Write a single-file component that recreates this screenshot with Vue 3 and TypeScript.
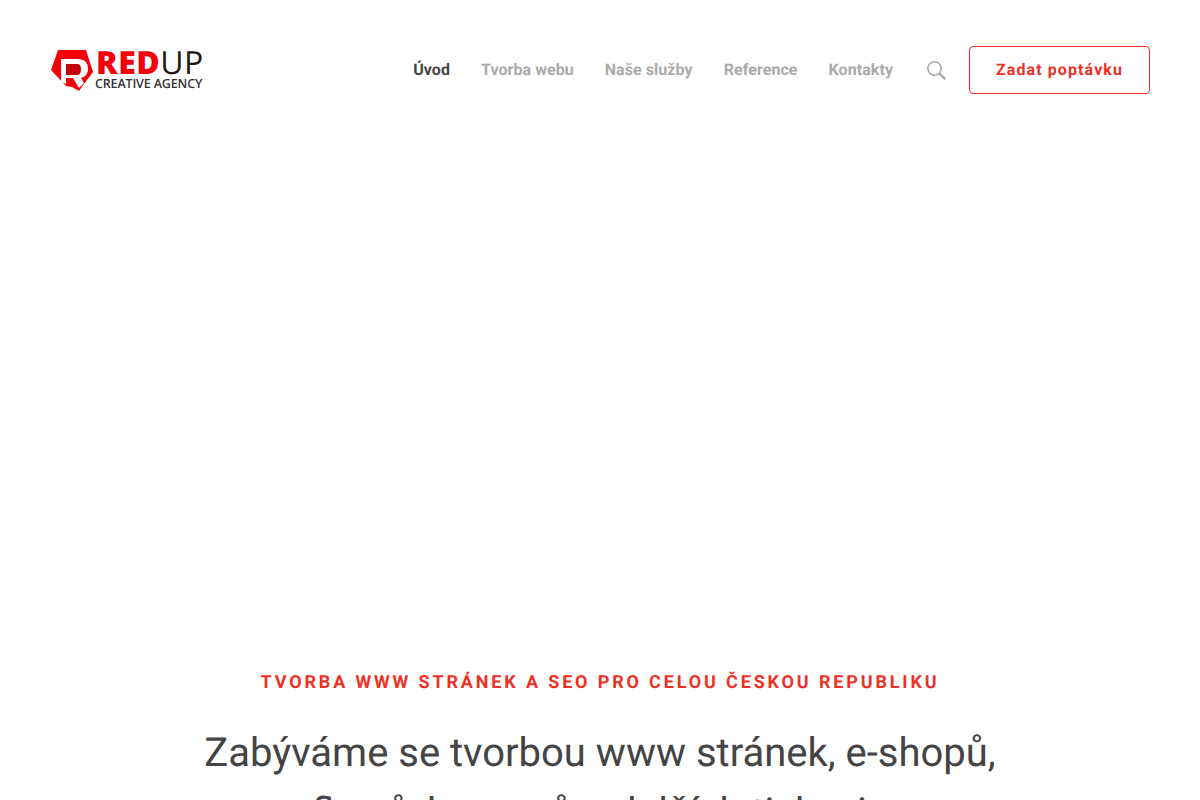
<template>
  <div class="page">
    <header class="site-header">
      <a class="logo" href="#" aria-label="RedUp Creative Agency">
        <svg class="logo-mark" width="43" height="42" viewBox="0 0 43 42">
          <path d="M7 1 H35 L42 23 L33 35 L28 42 L21 38 L15 37 L0 21 Z" fill="#f5000a" />
          <path d="M10 10 H27 Q37 10 37 20 Q37 27 30 29 L33 34 L28 39 L22 29 H15 V35 L10 33 Z" fill="#fff" />
          <path d="M15 15 H26 Q30 15 30 20 Q30 26 26 26 H15 Z" fill="#c4000a" />
        </svg>
        <span class="logo-text">
          <span class="logo-name"><b>RED</b><i>UP</i></span>
          <span class="logo-sub">CREATIVE AGENCY</span>
        </span>
      </a>

      <nav class="main-nav">
        <a
          v-for="item in navItems"
          :key="item.label"
          href="#"
          class="nav-link"
          :class="{ active: item.active }"
        >{{ item.label }}</a>
      </nav>

      <button type="button" class="search-btn" aria-label="Hledat">
        <svg width="20" height="20" viewBox="0 0 20 20" fill="none" stroke="#aaaaaa">
          <circle cx="8.5" cy="8.5" r="6.7" stroke-width="1.6" />
          <path d="M13.5 13.5 L18.6 18.6" stroke-width="2.2" stroke-linecap="round" />
        </svg>
      </button>

      <a href="#" class="cta">Zadat poptávku</a>
    </header>

    <main class="hero">
      <h2 class="eyebrow">TVORBA WWW STRÁNEK A SEO PRO CELOU ČESKOU REPUBLIKU</h2>
      <h1 class="headline">Zabýváme se tvorbou www stránek, e-shopů,<br />flyerů, bannerů a dalších tiskovin</h1>
    </main>
  </div>
</template>

<script setup lang="ts">
interface NavItem {
  label: string;
  active?: boolean;
}

const navItems: NavItem[] = [
  { label: 'Úvod', active: true },
  { label: 'Tvorba webu' },
  { label: 'Naše služby' },
  { label: 'Reference' },
  { label: 'Kontakty' }
];
</script>

<style>
html,
body {
  margin: 0;
  height: 100%;
  overflow: hidden;
  background: #fff;
}
</style>

<style scoped>
.page {
  height: 800px;
  overflow: hidden;
  font-family: Roboto, "Liberation Sans", sans-serif;
  color: #444;
  text-rendering: geometricPrecision;
}

.site-header {
  display: flex;
  align-items: center;
  height: 48px;
  padding: 46px 50px 0 51px;
}

.logo {
  display: flex;
  align-items: center;
  gap: 2px;
  text-decoration: none;
  margin-right: auto;
}

.logo-mark {
  display: block;
}

.logo-text {
  display: flex;
  flex-direction: column;
  margin-top: -2px;
  color: #231815;
}

.logo-name {
  font-family: "Open Sans", sans-serif;
  font-size: 32px;
  line-height: 29px;
}

.logo-name b {
  font-weight: 800;
  letter-spacing: 0.5px;
  color: #f5000a;
}

.logo-name i {
  font-style: normal;
  font-weight: 400;
  letter-spacing: 0.5px;
}

.logo-sub {
  margin-left: -1px;
  font-family: "Open Sans", sans-serif;
  font-size: 12.5px;
  line-height: 13px;
  font-weight: 600;
  letter-spacing: -0.15px;
  color: #333;
  white-space: nowrap;
}

.main-nav {
  display: flex;
  gap: 31px;
}

.nav-link {
  font-size: 16px;
  line-height: 24px;
  font-weight: 700;
  letter-spacing: 0.06px;
  color: #aaa;
  text-decoration: none;
}

.nav-link.active {
  color: #444;
}

.search-btn {
  display: block;
  width: 20px;
  height: 20px;
  margin: 0 23px 0 33px;
  padding: 0;
  border: 0;
  background: none;
}

.cta {
  display: flex;
  align-items: center;
  justify-content: center;
  box-sizing: border-box;
  width: 181px;
  height: 48px;
  padding-bottom: 1px;
  border: 1px solid #ee3124;
  border-radius: 4px;
  color: #ee3124;
  font-size: 16px;
  font-weight: 700;
  letter-spacing: 1.1px;
  text-decoration: none;
}

.hero {
  padding-top: 577px;
  text-align: center;
}

.eyebrow {
  margin: 0;
  color: #ee3124;
  font-size: 18px;
  line-height: 24px;
  font-weight: 700;
  letter-spacing: 2.85px;
}

.headline {
  width: 860px;
  margin: 28px auto 0;
  font-size: 40px;
  line-height: 60px;
  font-weight: 400;
  color: #444;
}
</style>
